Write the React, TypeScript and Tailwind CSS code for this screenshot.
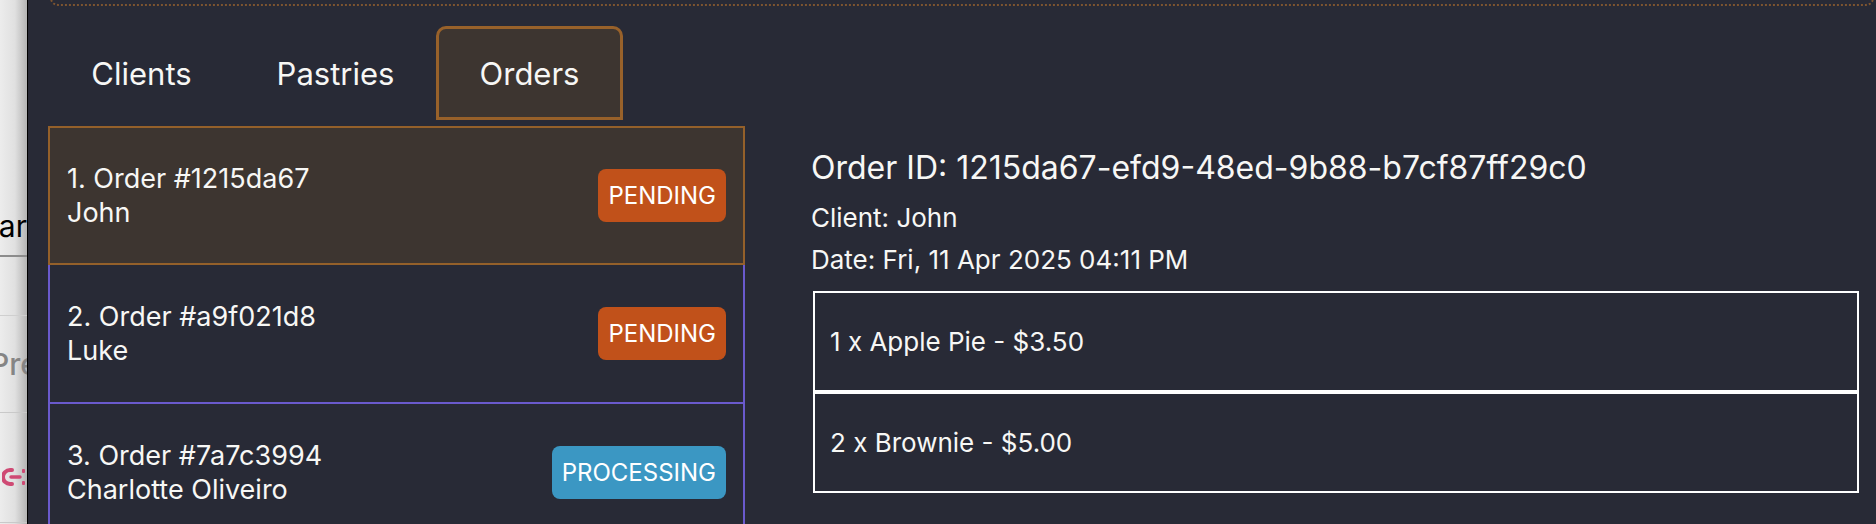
import React from "react";

type Order = {
  id: string;
  client: string;
  status: "PENDING" | "PROCESSING";
};

const orders: Order[] = [
  { id: "1215da67", client: "John", status: "PENDING" },
  { id: "a9f021d8", client: "Luke", status: "PENDING" },
  { id: "7a7c3994", client: "Charlotte Oliveiro", status: "PROCESSING" },
];

const tabs = ["Clients", "Pastries", "Orders"];

function SideStrip() {
  return (
    <div className="flex w-[28px] shrink-0 flex-col overflow-hidden border-r border-black bg-[linear-gradient(to_right,#ececec_0%,#e0e0e0_55%,#b4b4b4_100%)]">
      <div className="flex shrink-0 justify-end whitespace-nowrap pt-[211px] text-[30px] leading-[30px] text-black">ar</div>
      <div className="mt-[14px] h-[2px] shrink-0 bg-[#8c8c8c]" />
      <div className="mt-[58px] h-px shrink-0 bg-[#cfcfcf]" />
      <div className="-ml-[10px] mt-[33px] shrink-0 whitespace-nowrap text-[30px] font-medium leading-[30px] text-[#858585]">Pre</div>
      <div className="mt-[33px] h-px shrink-0 bg-[#c9c9c9]" />
      <svg className="mt-[54px] ml-[2px] shrink-0" width="25" height="20" viewBox="0 0 25 20" fill="none">
        <path d="M10 3H8a7 7 0 0 0 0 14h2" stroke="#cf4a74" strokeWidth="4" strokeLinecap="round" />
        <path d="M9 10h9" stroke="#cf4a74" strokeWidth="3.5" strokeLinecap="round" />
        <rect x="20" y="2" width="3" height="4" rx="1" fill="#cf4a74" />
        <rect x="20" y="14" width="3" height="4" rx="1" fill="#cf4a74" />
      </svg>
      <div className="mt-[35px] h-px shrink-0 bg-[#c9c9c9]" />
    </div>
  );
}

function StatusBadge({ status }: { status: Order["status"] }) {
  return (
    <span
      className={
        status === "PENDING"
          ? "flex h-[53px] items-center rounded-[8px] bg-[#c1511a] px-[10px] text-[24px] text-white"
          : "flex h-[53px] items-center rounded-[8px] bg-[#3b97c3] px-[10px] text-[24px] text-white"
      }
    >
      {status}
    </span>
  );
}

export default function App() {
  return (
    <div className="flex h-[524px] w-[1876px] overflow-hidden font-['Inter','Noto_Sans',sans-serif] text-[#f7f7f5]">
      <SideStrip />

      <div className="flex min-w-0 flex-1 flex-col bg-[#282a36]">
        <div className="ml-[22px] mr-[2px] -mt-[19px] h-[25px] shrink-0 rounded-b-[8px] border-2 border-dotted border-[#7c5430]" />

        <div className="mt-[20px] flex shrink-0 gap-[7px] pl-[20px]">
          {tabs.map((tab) => (
            <div
              key={tab}
              className={
                tab === "Orders"
                  ? "flex h-[94px] w-[187px] items-center justify-center rounded-t-[10px] border-[3px] border-[#98612a] bg-[#3d3530] pt-[3px] text-[31px]"
                  : "flex h-[94px] w-[187px] items-center justify-center pt-[3px] text-[31px]"
              }
            >
              {tab}
            </div>
          ))}
        </div>

        <div className="mt-[6px] flex shrink-0">
          <div className="ml-[20px] flex w-[697px] shrink-0 flex-col">
            {orders.map((order, i) => (
              <div
                key={order.id}
                className={
                  i === 0
                    ? "flex h-[139px] shrink-0 items-center justify-between border-2 border-[#94602a] bg-[#3d3530] px-[17px]"
                    : "flex h-[139px] shrink-0 items-center justify-between border-x-2 border-b-2 border-[#6a5acd] px-[17px]"
                }
              >
                <div className="text-[27px] leading-[34px]">
                  <div>
                    {i + 1}. Order #{order.id}
                  </div>
                  <div>{order.client}</div>
                </div>
                <StatusBadge status={order.status} />
              </div>
            ))}
          </div>

          <div className="ml-[66px] mr-[17px] flex flex-1 flex-col pt-[23px]">
            <div className="text-[32px] leading-[38px]">Order ID: 1215da67-efd9-48ed-9b88-b7cf87ff29c0</div>
            <div className="mt-[10px] text-[26px] leading-[42px]">Client: John</div>
            <div className="text-[26px] leading-[42px]">Date: Fri, 11 Apr 2025 04:11 PM</div>
            <div className="ml-[2px] mt-[10px] flex flex-col">
              <div className="flex h-[101px] items-center border-2 border-white px-[15px] text-[26px]">1 x Apple Pie - $3.50</div>
              <div className="flex h-[101px] items-center border-2 border-white px-[15px] text-[26px]">2 x Brownie - $5.00</div>
            </div>
          </div>
        </div>
      </div>
    </div>
  );
}
